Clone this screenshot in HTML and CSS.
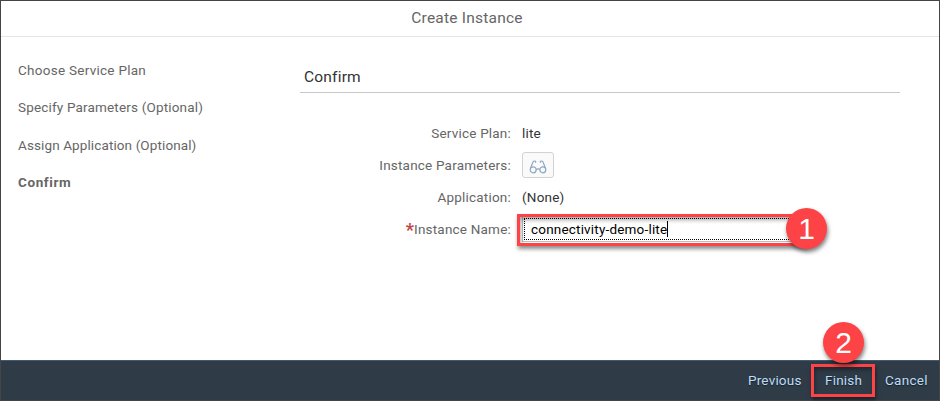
FILE: index.html
```html
<!DOCTYPE html>
<html lang="en">
<head>
<meta charset="utf-8">
<title>Create Instance</title>
<link rel="stylesheet" href="styles.css">
</head>
<body>
<div class="dialog">
  <header class="header"><span>Create Instance</span></header>
  <div class="body">
    <nav class="steps">
      <div class="step choose">Choose Service Plan</div>
      <div class="step specify">Specify Parameters (Optional)</div>
      <div class="step assign">Assign Application (Optional)</div>
      <div class="step current">Confirm</div>
    </nav>
    <main class="content">
      <h2 class="title">Confirm</h2>
      <div class="form">
        <label>Service Plan:</label><div class="value">lite</div>
        <label>Instance Parameters:</label>
        <div class="value">
          <button class="view" aria-label="View">
            <svg width="18" height="14" viewBox="0 0 18 14" fill="none" stroke="#8ba9c2" stroke-width="1.2">
              <circle cx="4.2" cy="9.8" r="3"/><circle cx="13.8" cy="9.8" r="3"/>
              <path d="M7.2 9.5Q9 8.2 10.8 9.5M1.4 8.5L4.2 1.6Q5 .6 6.6 1.3V2.8M16.6 8.5L13.8 1.6Q13 .6 11.4 1.3V2.8"/>
            </svg>
          </button>
        </div>
        <label>Application:</label><div class="value">(None)</div>
        <label class="required"><b class="star">*</b>Instance Name:</label>
        <div class="value">
          <div class="field"><div class="input">connectivity-demo-lite<i class="caret"></i></div>
            <div class="mark"></div><div class="badge one">1</div>
          </div>
        </div>
      </div>
    </main>
  </div>
  <footer class="footer">
    <span class="action previous">Previous</span>
    <span class="action finish">Finish<i class="mark"></i><i class="badge two">2</i></span>
    <span class="action cancel">Cancel</span>
  </footer>
</div>
</body>
</html>
```
FILE: styles.css
```css
* { box-sizing: border-box; }
body { margin: 0; font: 13.5px/20px Roboto, "Liberation Sans", sans-serif; color: #666; letter-spacing: .2px; }
.dialog { width: 940px; height: 401px; border: 1px solid #454545; background: #fff; display: flex; flex-direction: column; }
.header { height: 36px; border-bottom: 1px solid #e5e5e5; text-align: center; font-size: 15.5px; line-height: 34px; padding-right: 6px; letter-spacing: .22px; }
.body { flex: 1; display: flex; }
.steps { width: 299px; padding: 23px 0 0 17px; }
.step { height: 37.4px; white-space: nowrap; }
.choose { letter-spacing: .27px; }
.specify { letter-spacing: .17px; }
.assign { letter-spacing: .11px; }
.current { font-weight: 700; letter-spacing: .6px; }
.content { width: 600px; padding-top: 24px; }
.title { margin: 0; height: 32px; padding-left: 4px; border-bottom: 1px solid #c8c8c8; font-size: 15.5px; line-height: 33px; font-weight: 400; color: #333; }
.form { display: grid; grid-template-columns: 211px 1fr; column-gap: 11px; grid-auto-rows: 32px; align-items: center; margin-top: 24px; }
.form label { text-align: right; white-space: nowrap; }
.value { color: #333; }
.view { display: flex; align-items: center; justify-content: center; width: 32px; height: 26px; padding: 3px 0 0; border: 1px solid #d3d3d3; border-radius: 3px; background: #fafafa; }
.star { color: #c14646; font-size: 18px; line-height: 14px; vertical-align: -2px; }
.field { position: relative; width: 285px; height: 26px; border: 1px solid #bfbfbf; padding: 1px; }
.input { height: 22px; border: 1px dotted #000; padding-left: 6px; line-height: 20px; color: #000; display: flex; align-items: center; letter-spacing: .19px; }
.caret { width: 1px; height: 16px; background: #000; }
.mark { position: absolute; border: 3px solid #fd4345; box-shadow: 1px 3px 4px rgba(0,0,0,.45), inset 1px 3px 4px rgba(0,0,0,.35); }
.field .mark { left: -6px; top: -3px; width: 290px; height: 32px; }
.badge { position: absolute; width: 41px; height: 41px; border-radius: 50%; background: #fd4345; color: #fff; font: 30px/41px "Liberation Sans", sans-serif; letter-spacing: 0; text-align: center; box-shadow: 1px 3px 4px rgba(0,0,0,.5); }
.one { left: 263px; top: -9px; }
.footer { height: 40px; background: #2f3c48; border-top: 1px solid #41596c; display: flex; justify-content: flex-end; align-items: center; padding: 0 11px 2px 0; color: #bfdcf5; }
.action { position: relative; margin-left: 24px; text-shadow: 0 1px 1px #17212b; white-space: nowrap; }
.previous { width: 53px; }
.finish { width: 36px; }
.cancel { width: 43px; letter-spacing: .3px; }
.finish .mark { left: -14px; top: -6px; width: 64px; height: 33px; }
.two { left: -2px; top: -48px; text-shadow: none; }
```
